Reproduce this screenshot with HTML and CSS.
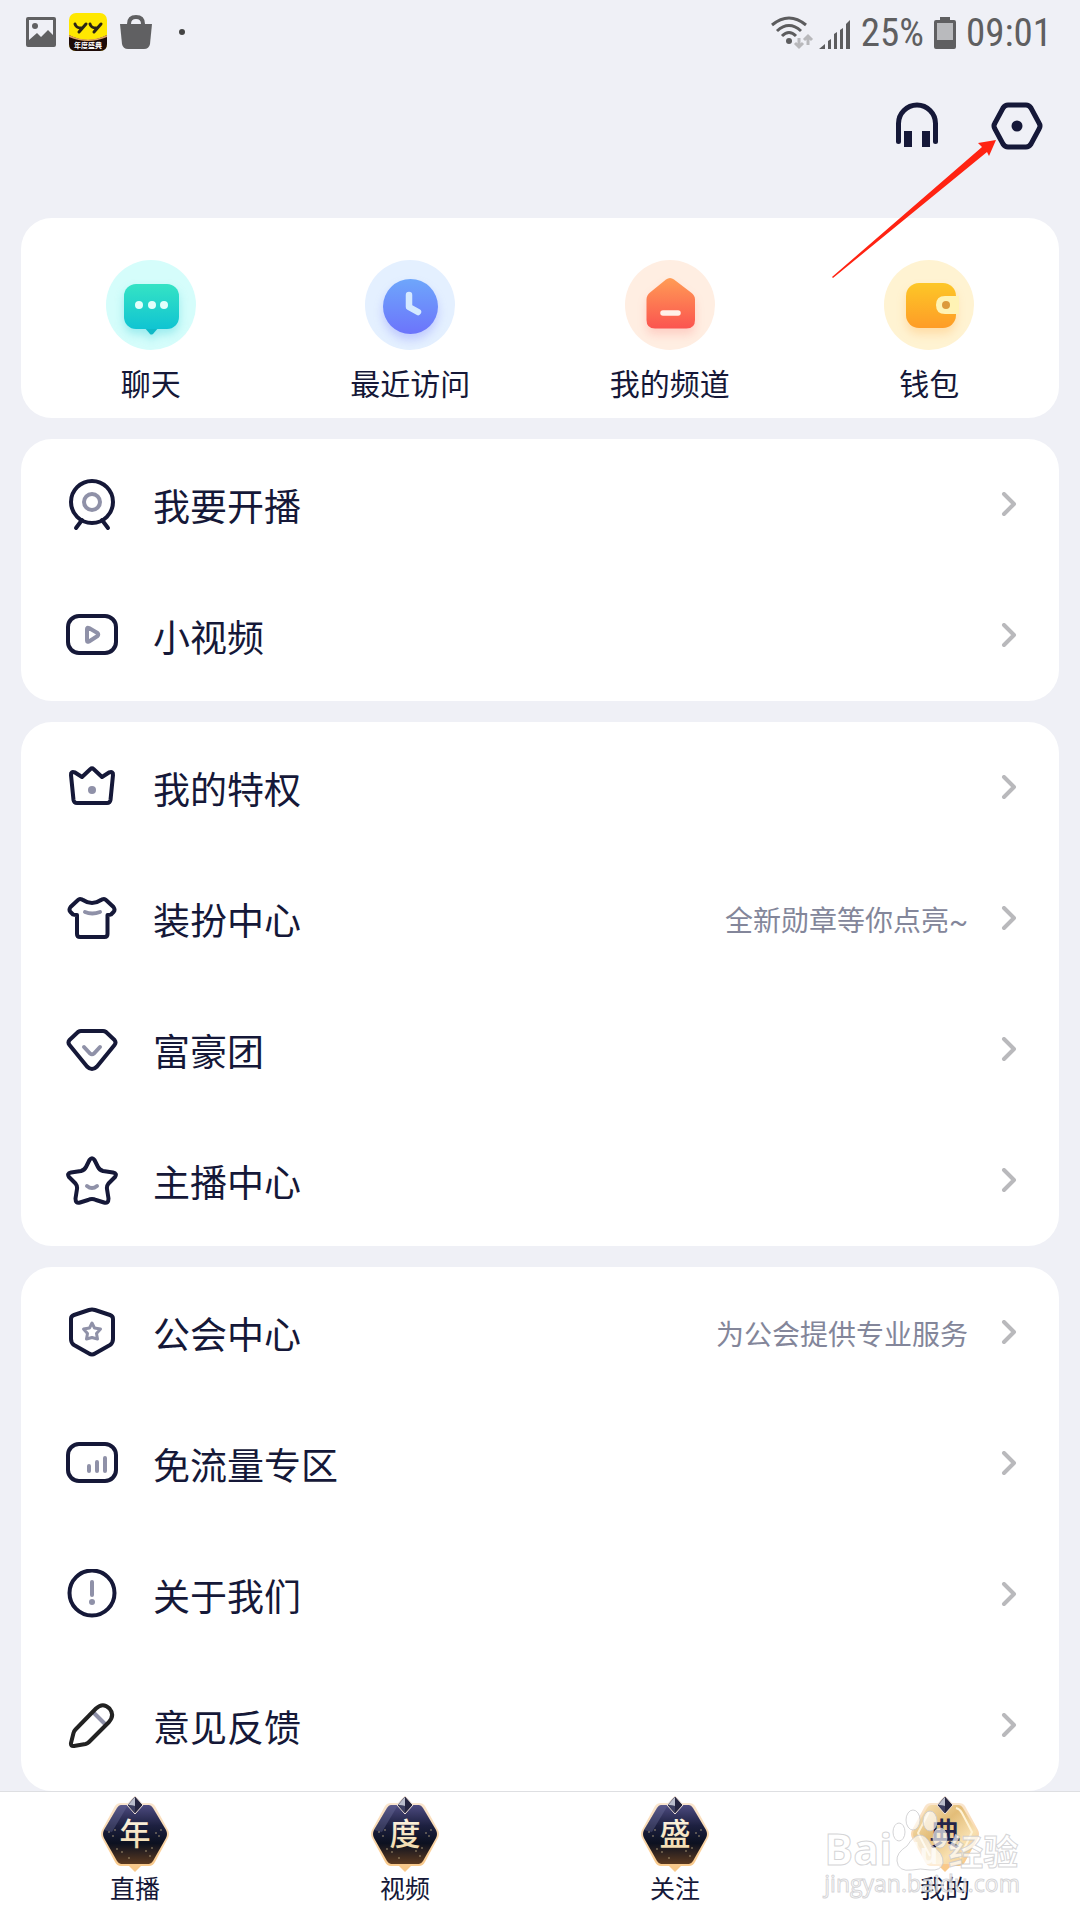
FILE: index.html
```html
<!DOCTYPE html>
<html lang="zh-CN">
<head>
    <meta charset="UTF-8">
    <meta name="viewport" content="width=device-width, initial-scale=1.0">
    <title>我的</title>
    <link rel="stylesheet" href="styles.css">
</head>
<body>
    <!-- Shared shapes -->
    <svg class="defs" width="0" height="0" aria-hidden="true">
        <defs>
            <linearGradient id="g-chat" x1="0" y1="0" x2="0" y2="1">
                <stop offset="0" stop-color="#35e3c4"/>
                <stop offset="1" stop-color="#10c4d2"/>
            </linearGradient>
            <linearGradient id="g-clock" x1="0" y1="0" x2="0" y2="1">
                <stop offset="0" stop-color="#6ea6fb"/>
                <stop offset="1" stop-color="#6c74fb"/>
            </linearGradient>
            <linearGradient id="g-house" x1="0" y1="0" x2="0" y2="1">
                <stop offset="0" stop-color="#ff9c55"/>
                <stop offset="1" stop-color="#fb5450"/>
            </linearGradient>
            <linearGradient id="g-wallet" x1="0" y1="0" x2="0" y2="1">
                <stop offset="0" stop-color="#fdc727"/>
                <stop offset="1" stop-color="#fe9c27"/>
            </linearGradient>
            <linearGradient id="g-night" x1="0" y1="0" x2="0" y2="1">
                <stop offset="0" stop-color="#4d4b80"/>
                <stop offset="0.35" stop-color="#1d2040"/>
                <stop offset="0.65" stop-color="#0c1120"/>
                <stop offset="1" stop-color="#5c3a20"/>
            </linearGradient>
            <linearGradient id="g-gold" x1="0" y1="0" x2="1" y2="1">
                <stop offset="0" stop-color="#fbe9c4"/>
                <stop offset="0.4" stop-color="#e3bd78"/>
                <stop offset="0.7" stop-color="#f8e0b0"/>
                <stop offset="1" stop-color="#f0c98c"/>
            </linearGradient>
            <linearGradient id="g-rim" x1="0" y1="0" x2="0" y2="1">
                <stop offset="0" stop-color="#fae6cf"/>
                <stop offset="1" stop-color="#f9c98a"/>
            </linearGradient>
            <linearGradient id="g-char" x1="0" y1="0" x2="0" y2="1">
                <stop offset="0" stop-color="#fffaf0"/>
                <stop offset="1" stop-color="#efd6a4"/>
            </linearGradient>
            <symbol id="chevron" viewBox="0 0 16 26">
                <path d="M3 2L13 12L3 22" fill="none" stroke="#b9b9bc" stroke-width="4" stroke-linecap="round" stroke-linejoin="round"/>
            </symbol>
            <symbol id="badge-rim" viewBox="0 0 70 76">
                <path d="M27 68H43L35 76Z" fill="#f9c98a"/>
                <path d="M21 7H49Q53 7 55 10L68 34Q70 38 68 42L55 66Q53 70 49 70H21Q17 70 15 66L2 42Q0 38 2 34L15 10Q17 7 21 7Z" fill="url(#g-rim)"/>
            </symbol>
            <symbol id="badge-gem" viewBox="0 0 70 76">
                <path d="M35 0L43 9L35 18L27 9Z" fill="#24243f" stroke="#f4e6dc" stroke-width="1"/>
                <path d="M35 1V10L28 9Z" fill="#b9bccb"/>
                <path d="M28 9L35 10V17Z" fill="#3c3e60"/>
            </symbol>
            <symbol id="badge-dark" viewBox="0 0 70 76">
                <use href="#badge-rim" width="70" height="76"/>
                <path d="M21 9H49Q51 9 53 12L66 34Q68 38 66 42L53 65Q51 68 49 68H21Q19 68 17 65L4 42Q2 38 4 34L17 12Q19 9 21 9Z" fill="url(#g-night)"/>
                <path d="M17 12L4 34L12 36L28 9H21Q19 9 17 12Z" fill="#7476a0" opacity="0.35"/>
                <g fill="#c9b58a" opacity="0.5">
                    <circle cx="9" cy="36" r="1"/><circle cx="15" cy="34" r="1"/><circle cx="13" cy="40" r="1"/>
                    <circle cx="56" cy="37" r="1"/><circle cx="61" cy="34" r="1"/><circle cx="59" cy="40" r="1"/>
                    <circle cx="17" cy="53" r="1"/><circle cx="22" cy="56" r="1"/><circle cx="29" cy="62" r="1"/>
                    <circle cx="46" cy="55" r="1"/><circle cx="52" cy="52" r="1"/><circle cx="50" cy="60" r="1"/>
                </g>
                <use href="#badge-gem" width="70" height="76"/>
            </symbol>
            <symbol id="badge-gold" viewBox="0 0 70 76">
                <use href="#badge-rim" width="70" height="76"/>
                <path d="M21 9H49Q51 9 53 12L66 34Q68 38 66 42L53 65Q51 68 49 68H21Q19 68 17 65L4 42Q2 38 4 34L17 12Q19 9 21 9Z" fill="url(#g-gold)"/>
                <path d="M46 12Q50 13 52 17L62 36L50 62" fill="none" stroke="#fff3d6" stroke-width="2"/>
                <path d="M19 16L8 37L20 60" fill="none" stroke="#fdf0d2" stroke-width="2"/>
                <use href="#badge-gem" width="70" height="76"/>
            </symbol>
        </defs>
    </svg>

    <div class="status-bar">
        <div class="status-left">
            <svg width="32" height="32" viewBox="0 0 32 32">
                <path fill="#606062" fill-rule="evenodd" d="M3 1H29Q31 1 31 3V29Q31 31 29 31H3Q1 31 1 29V3Q1 1 3 1ZM4 4V24L12 17L16 21L23 14L28 19V4Z"/>
                <circle cx="10" cy="10" r="3" fill="#606062"/>
            </svg>
            <svg class="yy-app" width="38" height="38" viewBox="0 0 38 38">
                <rect width="38" height="38" rx="7" fill="#ffe800"/>
                <path d="M0 22Q19 32 38 22V31Q38 38 31 38H7Q0 38 0 31Z" fill="#1d0a08"/>
                <path d="M0 22Q19 31 38 22V24Q19 32 0 24Z" fill="#e0a35e"/>
                <path d="M6 11Q7 15 12 15M17 11L10 19M21 11Q22 15 27 15M32 11L25 19" fill="none" stroke="#2a2416" stroke-width="3" stroke-linecap="round"/>
                <text x="19" y="35" text-anchor="middle" class="yy-text">年度盛典</text>
            </svg>
            <svg width="34" height="36" viewBox="0 0 34 36">
                <path d="M10 11V10Q10 3 17 3Q24 3 24 10V11" fill="none" stroke="#606062" stroke-width="4"/>
                <path d="M1 10H33L31 30Q30 35 25 35H9Q4 35 3 30Z" fill="#606062"/>
            </svg>
            <span class="status-dot"></span>
        </div>
        <div class="status-right">
            <svg width="80" height="34" viewBox="0 0 80 34">
                <g fill="none" stroke="#5c5c5e" stroke-width="3">
                    <path d="M1 9Q18 -5 35 9"/>
                    <path d="M6 15Q18 4 30 15"/>
                    <path d="M11 20Q18 13 25 20"/>
                </g>
                <circle cx="18" cy="25" r="3" fill="#5c5c5e"/>
                <path d="M28 22V31M24 27L28 31L32 27M37 29V20M33 24L37 20L41 24" fill="none" stroke="#b8b8bb" stroke-width="3"/>
                <path d="M48 33L54 28V33ZM57 33V25L60 23V33ZM63 33V18L66 16V33ZM69 33V14L72 12V33ZM75 33V8L79 4V33Z" fill="#5c5c5e"/>
            </svg>
            <span>25%</span>
            <svg width="22" height="32" viewBox="0 0 22 32">
                <path d="M6 0H16V3H20Q22 3 22 5V30Q22 32 20 32H2Q0 32 0 30V5Q0 3 2 3H6Z" fill="#5f5f61"/>
                <rect x="3" y="6" width="16" height="17" fill="#b9babd"/>
            </svg>
            <span>09:01</span>
        </div>
    </div>

    <header class="top-bar">
        <button type="button" class="icon-button" aria-label="客服">
            <svg width="56" height="56" viewBox="0 0 56 56">
                <path d="M9.5 43.5V25.5A18.5 18.5 0 0 1 46.5 25.5V43.5" fill="none" stroke="#151838" stroke-width="5" stroke-linecap="round"/>
                <path d="M15 33H23V49H15ZM33 33H41V49H33Z" fill="#151838"/>
            </svg>
        </button>
        <button type="button" class="icon-button" aria-label="设置">
            <svg width="56" height="56" viewBox="0 0 56 56">
                <path d="M19 7H37Q40 7 42 10L50 25Q52 28 50 31L42 46Q40 49 37 49H19Q16 49 14 46L6 31Q4 28 6 25L14 10Q16 7 19 7Z" fill="none" stroke="#151838" stroke-width="5"/>
                <circle cx="28" cy="28" r="5.5" fill="#151838"/>
            </svg>
        </button>
        <svg class="pointer-arrow" width="168" height="140" viewBox="0 0 168 140">
            <path d="M1 139L151 9L147 5L165 2L158 18L156 14L2 140Z" fill="#ff2312"/>
        </svg>
    </header>

    <main>
        <section class="card shortcuts">
            <a href="#chat">
                <svg width="90" height="90" viewBox="0 0 90 90">
                    <circle cx="45" cy="45" r="45" fill="#d5fdfb"/>
                    <g class="shade-chat">
                        <path d="M38 67H53L47 74Q45 75 44 74Z" fill="#0fb9c6"/>
                        <rect x="18" y="24" width="55" height="45" rx="12" fill="url(#g-chat)"/>
                    </g>
                    <g fill="#e2fffb"><circle cx="33" cy="45" r="4"/><circle cx="46" cy="45" r="4"/><circle cx="58" cy="45" r="4"/></g>
                </svg>
                <span>聊天</span>
            </a>
            <a href="#recent">
                <svg width="90" height="90" viewBox="0 0 90 90">
                    <circle cx="45" cy="45" r="45" fill="#e4f0ff"/>
                    <circle class="shade-clock" cx="45.5" cy="46.5" r="27.5" fill="url(#g-clock)"/>
                    <path d="M44 35V47L53 52" fill="none" stroke="#d5e9ff" stroke-width="6.5" stroke-linecap="round" stroke-linejoin="round"/>
                </svg>
                <span>最近访问</span>
            </a>
            <a href="#channel">
                <svg width="90" height="90" viewBox="0 0 90 90">
                    <circle cx="45" cy="45" r="45" fill="#ffeee2"/>
                    <path class="shade-house" d="M41 19.5Q45 16.5 49 19.5L66 32.5Q70 35.5 70 39.5V60Q70 68.5 61.5 68.5H30Q21.5 68.5 21.5 60V39.5Q21.5 35.5 25 32.5Z" fill="url(#g-house)"/>
                    <path d="M38 53H53" stroke="#fff0e8" stroke-width="5.5" stroke-linecap="round"/>
                </svg>
                <span>我的频道</span>
            </a>
            <a href="#wallet">
                <svg width="90" height="90" viewBox="0 0 90 90">
                    <circle cx="45" cy="45" r="45" fill="#fff3d2"/>
                    <rect class="shade-wallet" x="22" y="23" width="50" height="45" rx="13" fill="url(#g-wallet)"/>
                    <path d="M61 36H75V54H61Q52 54 52 45Q52 36 61 36Z" fill="#fff3b4"/>
                    <circle cx="62" cy="45" r="4" fill="#dc9a3c"/>
                </svg>
                <span>钱包</span>
            </a>
        </section>

        <nav class="card menu">
            <a href="#live">
                <svg class="menu-icon" viewBox="0 0 52 52">
                    <circle cx="26" cy="23" r="21"/>
                    <path d="M16 41L10 49M36 41L42 49"/>
                    <circle class="soft" cx="26" cy="23" r="8"/>
                </svg>
                <span class="menu-label">我要开播</span>
                <svg class="chevron"><use href="#chevron"/></svg>
            </a>
            <a href="#video">
                <svg class="menu-icon" viewBox="0 0 52 52">
                    <rect x="2" y="6" width="48" height="37" rx="11"/>
                    <path class="soft" d="M21 19Q21 17 23 18L31.5 23Q33 24.5 31.5 26L23 31.5Q21 32.5 21 30.5Z"/>
                </svg>
                <span class="menu-label">小视频</span>
                <svg class="chevron"><use href="#chevron"/></svg>
            </a>
        </nav>

        <nav class="card menu">
            <a href="#privilege">
                <svg class="menu-icon" viewBox="0 0 52 52">
                    <path d="M16 15L24.500 7Q26 5.500 27.500 7L36 15L43 10.500Q47.500 9 47 13L44.500 38Q44 41 41 41H11Q8 41 7.500 38L5 13Q4.500 9 9 10.500Z"/>
                    <circle class="dot" cx="26" cy="28" r="4"/>
                </svg>
                <span class="menu-label">我的特权</span>
                <svg class="chevron"><use href="#chevron"/></svg>
            </a>
            <a href="#dress">
                <svg class="menu-icon" viewBox="0 0 52 52">
                    <path d="M14 6Q16 6 17 7Q26 13 35 7Q36 6 38 6Q39 6 40 7L47.5 14Q49.5 17 47.5 19L45 21.5Q44 22 41.5 22V41Q41.5 44 38.5 44H14Q11 44 11 41V22Q8 22 7 21.5L4.5 19Q2.5 17 4.5 14L12 7Q13 6 14 6Z"/>
                    <path class="soft" d="M19 19Q26 22 34 19"/>
                </svg>
                <span class="menu-label">装扮中心</span>
                <span class="menu-hint">全新勋章等你点亮~</span>
                <svg class="chevron"><use href="#chevron"/></svg>
            </a>
            <a href="#rich">
                <svg class="menu-icon" viewBox="0 0 52 52">
                    <path d="M15 7H37Q38.5 7 40 8L48.5 16Q50.5 18.5 48.5 21L31 42.5Q26 47.5 21 42.5L3.5 21Q1.5 18.5 3.5 16L12 8Q13.5 7 15 7Z"/>
                    <path class="soft" d="M18 23L24 29.5Q26 31 28 29.5L34 23"/>
                </svg>
                <span class="menu-label">富豪团</span>
                <svg class="chevron"><use href="#chevron"/></svg>
            </a>
            <a href="#anchor">
                <svg class="menu-icon" viewBox="0 0 52 52">
                    <path d="M23.5 5Q26 1.5 28.5 5L32 12Q33.5 15 37 16L47 17.5Q51.5 18.5 49 22L42.5 28.5Q40.5 31 41 34L42.5 43.5Q42.5 49 38 47.5L30 45Q26 43 22 45L14 47.5Q9.5 49 9.5 43.5L11 34Q11.5 31 9.5 28.5L3 22Q0.5 18.5 5 17.5L15 16Q18.5 15 20 12Z"/>
                    <path class="soft" d="M21 31Q26 35 31 31"/>
                </svg>
                <span class="menu-label">主播中心</span>
                <svg class="chevron"><use href="#chevron"/></svg>
            </a>
        </nav>

        <nav class="card menu">
            <a href="#guild">
                <svg class="menu-icon" viewBox="0 0 52 52">
                    <path d="M23 3Q26 2 29 3L44 8Q47 9 47 12V32Q47 36 44 38L29 46.5Q26 48.5 23 46.5L8 38Q5 36 5 32V12Q5 9 8 8Z"/>
                    <path class="soft thin" d="M26 16L28.5 21L34.5 22L30.5 26.5L31.5 32L26 30.5L20.5 32L21.5 26.5L17.5 22L23.5 21Z"/>
                </svg>
                <span class="menu-label">公会中心</span>
                <span class="menu-hint">为公会提供专业服务</span>
                <svg class="chevron"><use href="#chevron"/></svg>
            </a>
            <a href="#data">
                <svg class="menu-icon" viewBox="0 0 52 52">
                    <rect x="2" y="6" width="48" height="37" rx="11"/>
                    <path class="soft" d="M23 28V33M31 24V33M39 20V33"/>
                </svg>
                <span class="menu-label">免流量专区</span>
                <svg class="chevron"><use href="#chevron"/></svg>
            </a>
            <a href="#about">
                <svg class="menu-icon" viewBox="0 0 52 52">
                    <circle cx="26" cy="24" r="22.5"/>
                    <path class="soft" d="M26 13V26"/>
                    <circle class="dot" cx="26" cy="33" r="3"/>
                </svg>
                <span class="menu-label">关于我们</span>
                <svg class="chevron"><use href="#chevron"/></svg>
            </a>
            <a href="#feedback">
                <svg class="menu-icon" viewBox="0 0 52 52">
                    <path class="soft" d="M28 13L39 24"/>
                    <path class="ink" d="M30 8.5Q37 2 43.5 8.5Q49 15 43 22L23 42Q21.5 43.5 19.5 44L8 46Q4.5 46.5 5 43L7.5 33Q8 31 9.5 29.5Z"/>
                </svg>
                <span class="menu-label">意见反馈</span>
                <svg class="chevron"><use href="#chevron"/></svg>
            </a>
        </nav>
    </main>

    <footer class="tab-bar">
        <a href="#tab-live">
            <svg width="70" height="76" viewBox="0 0 70 76">
                <use href="#badge-dark"/>
                <text class="badge-text" x="35" y="49" fill="url(#g-char)">年</text>
            </svg>
            <span>直播</span>
        </a>
        <a href="#tab-video">
            <svg width="70" height="76" viewBox="0 0 70 76">
                <use href="#badge-dark"/>
                <text class="badge-text" x="35" y="49" fill="url(#g-char)">度</text>
            </svg>
            <span>视频</span>
        </a>
        <a href="#tab-follow">
            <svg width="70" height="76" viewBox="0 0 70 76">
                <use href="#badge-dark"/>
                <text class="badge-text" x="35" y="49" fill="url(#g-char)">盛</text>
            </svg>
            <span>关注</span>
        </a>
        <a href="#tab-me">
            <svg width="70" height="76" viewBox="0 0 70 76">
                <use href="#badge-gold"/>
                <text class="badge-text" x="35" y="49" fill="#24244a">典</text>
            </svg>
            <span>我的</span>
        </a>
        <div class="watermark">
            <div class="watermark-logo">
                <span>Bai</span>
                <svg width="56" height="66" viewBox="0 0 56 66">
                    <g fill="#ffffff" fill-opacity="0.65" stroke="#c9c9cc" stroke-opacity="0.8">
                        <ellipse cx="7" cy="24" rx="6" ry="9"/>
                        <ellipse cx="21" cy="12" rx="7" ry="10"/>
                        <ellipse cx="38" cy="13" rx="7" ry="10"/>
                        <ellipse cx="48" cy="30" rx="7" ry="10"/>
                        <path d="M28 27Q34 27 39 37Q52 45 51 55Q49 63 38 62Q28 60 20 62Q6 64 5 53Q4 45 15 38Q22 27 28 27Z"/>
                    </g>
                    <text x="28" y="56" text-anchor="middle" class="paw-text">du</text>
                </svg>
                <span class="watermark-cn">经验</span>
            </div>
            <div class="watermark-url">jingyan.baidu.com</div>
        </div>
    </footer>
</body>
</html>
```

FILE: styles.css
```css
* {
    box-sizing: border-box;
}

body {
    display: flex;
    flex-direction: column;
    min-height: 100vh;
    margin: 0;
    background: #eff0f6;
    color: #151838;
    font-family: "Noto Sans CJK SC", sans-serif;
}

a {
    color: inherit;
    text-decoration: none;
}

svg {
    display: block;
    flex-shrink: 0;
}

.defs {
    position: absolute;
}

/* Status bar */
.status-bar {
    display: flex;
    justify-content: space-between;
    height: 66px;
    padding: 0 28px 0 25px;
}

.status-left,
.status-right {
    display: flex;
    align-items: center;
}

.status-left {
    gap: 12px;
    height: 63px;
}

.status-right {
    gap: 10px;
    color: #5f5f61;
    font-family: "Roboto Condensed", "Liberation Sans Narrow", Roboto, sans-serif;
    font-size: 39px;
    line-height: 66px;
}

.status-dot {
    width: 6px;
    height: 6px;
    margin-left: 14px;
    border-radius: 50%;
    background: #444;
}

.yy-text {
    fill: #fff;
    font-size: 7px;
    font-weight: bold;
}

/* Header */
.top-bar {
    position: relative;
    display: flex;
    justify-content: flex-end;
    align-items: center;
    gap: 44px;
    height: 120px;
    padding-right: 35px;
}

.icon-button {
    padding: 0;
    border: none;
    background: none;
    cursor: pointer;
}

.pointer-arrow {
    position: absolute;
    top: 72px;
    right: 81px;
    pointer-events: none;
}

/* Cards */
main {
    display: flex;
    flex: 1;
    flex-direction: column;
    gap: 21px;
    padding: 32px 21px 0;
}

.card {
    border-radius: 31px;
    background: #fff;
}

.shortcuts {
    display: grid;
    grid-template-columns: repeat(4, 1fr);
    height: 200px;
    padding-top: 42px;
}

.shortcuts a {
    display: flex;
    flex-direction: column;
    align-items: center;
    gap: 10px;
    font-size: 30px;
    line-height: 44px;
}

.shade-chat {
    filter: drop-shadow(0 5px 5px rgba(16, 196, 210, 0.3));
}

.shade-clock {
    filter: drop-shadow(0 6px 5px rgba(108, 116, 251, 0.3));
}

.shade-house {
    filter: drop-shadow(0 6px 5px rgba(251, 84, 80, 0.2));
}

.shade-wallet {
    filter: drop-shadow(0 6px 5px rgba(254, 156, 39, 0.25));
}

.menu a {
    display: flex;
    align-items: center;
    height: 131px;
    padding: 0 42px 0 45px;
}

.menu-icon {
    width: 52px;
    height: 52px;
    margin-right: 35px;
    fill: none;
    stroke: #151838;
    stroke-width: 4;
    stroke-linecap: round;
    stroke-linejoin: round;
}

.menu-icon .soft {
    stroke: #8f91a8;
}

.menu-icon .thin {
    stroke-width: 3;
}

.menu-icon .dot {
    fill: #8f91a8;
    stroke: none;
}

.menu-icon .ink {
    stroke: #222;
}

.menu-label {
    flex: 1;
    font-size: 37px;
    line-height: 54px;
}

.menu-hint {
    margin-right: 33px;
    color: #83869a;
    font-family: Roboto, "Noto Sans CJK SC", sans-serif;
    font-size: 28px;
}

.chevron {
    width: 16px;
    height: 26px;
}

/* Bottom tabs */
.tab-bar {
    position: relative;
    display: grid;
    grid-template-columns: repeat(4, 1fr);
    height: 129px;
    padding-top: 4px;
    border-top: 1px solid #dedfe2;
    background: #fff;
}

.tab-bar a {
    display: flex;
    flex-direction: column;
    align-items: center;
    font-size: 25px;
    line-height: 30px;
}

.badge-text {
    font-size: 31px;
    font-weight: 500;
    text-anchor: middle;
}

.watermark {
    position: absolute;
    right: 60px;
    bottom: 28px;
    color: rgba(255, 255, 255, 0.7);
    font-family: "Open Sans", sans-serif;
    pointer-events: none;
    -webkit-text-stroke: 1px rgba(195, 195, 198, 0.7);
}

.watermark-logo {
    display: flex;
    align-items: flex-end;
    height: 66px;
    font-size: 43px;
    font-weight: bold;
    line-height: 50px;
}

.watermark-cn {
    font-family: "Noto Sans CJK SC", sans-serif;
    font-size: 35px;
    line-height: 48px;
}

.watermark-url {
    font-size: 23px;
    line-height: 18px;
}

.paw-text {
    fill: #fff;
    fill-opacity: 0.7;
    font-size: 28px;
    font-weight: bold;
}
```
